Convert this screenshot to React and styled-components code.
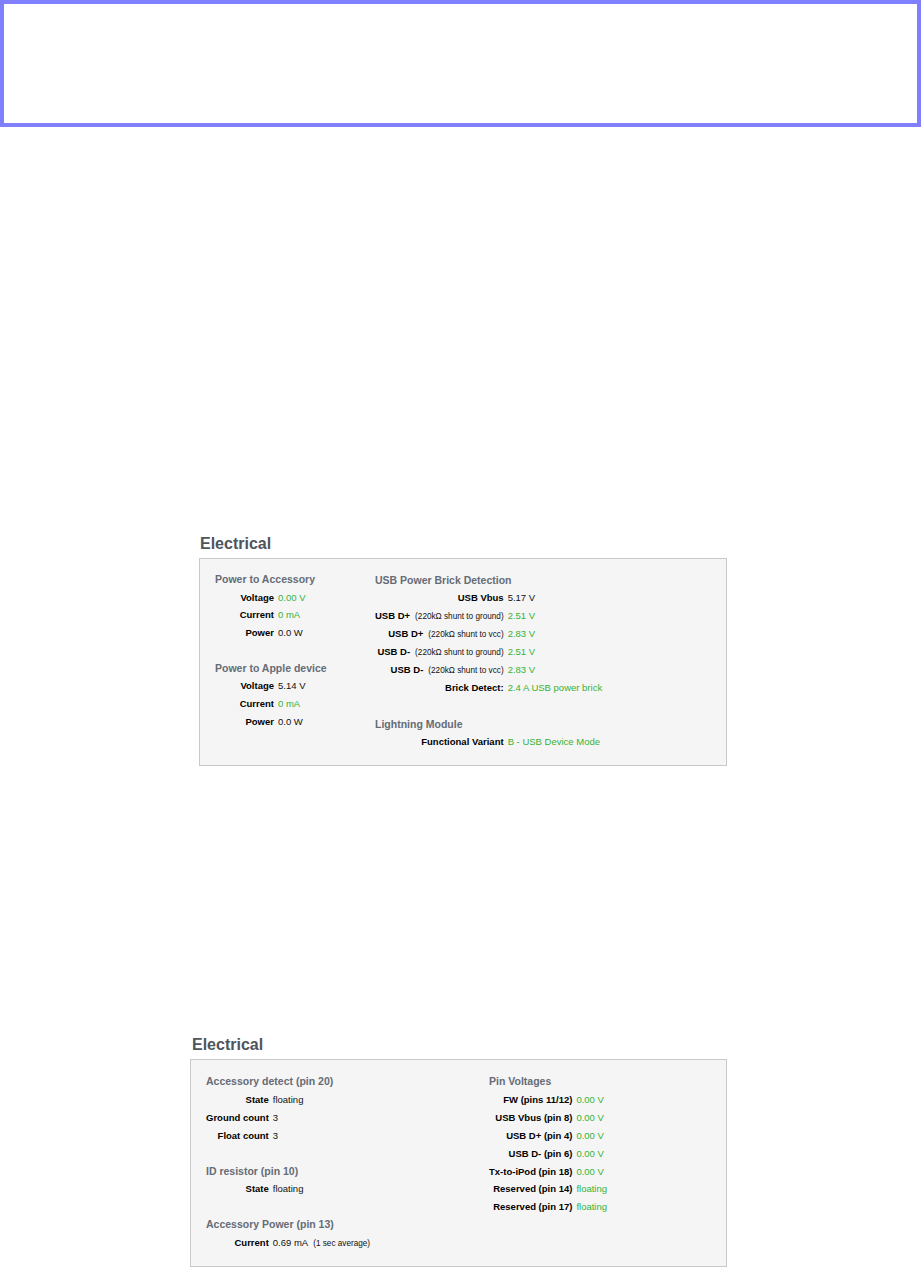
import React from 'react'
import styled, { createGlobalStyle } from 'styled-components'

const GREEN = '#36b336'

const GlobalStyle = createGlobalStyle`
  html, body {
    margin: 0;
    padding: 0;
    background: #ffffff;
    font-family: "Liberation Sans", Arial, Helvetica, sans-serif;
  }
`

//-------------------- empty framed banner at the top -----------------//
const Frame = styled.div`
  height: 127px;
  border: 4px solid #8080ff;
  box-sizing: border-box;
`

//-------------------- one "Electrical" block -------------------------//
const Section = styled.section`
  margin-top: ${p => p.$top}px;
  margin-left: ${p => p.$left}px;
  width: ${p => p.$width}px;
`

const Title = styled.h2`
  margin: 0 0 4px;
  padding-left: ${p => p.$indent}px;
  font-size: 16px;
  line-height: 20px;
  font-weight: bold;
  color: #4e555d;
`

const Panel = styled.div`
  display: flex;
  align-items: flex-start;
  background: #f5f5f5;
  border: 1px solid #c9c9c9;
  padding: ${p => p.$top}px 15px ${p => p.$bottom}px;
`

//-------------------- label / value grid -----------------------------//
const Column = styled.div`
  flex: none;
  width: ${p => (p.$width ? `${p.$width}px` : 'auto')};
  display: grid;
  grid-template-columns: minmax(${p => p.$min || 0}px, max-content) max-content;
  column-gap: 4px;
  align-content: start;
  line-height: ${p => p.$lh}px;
`

const GroupTitle = styled.div`
  grid-column: 1 / -1;
  margin-top: ${p => (p.$first ? 0 : p.$gap)}px;
  font-size: 10.5px;
  font-weight: bold;
  color: #656c75;
  white-space: nowrap;
`

const Label = styled.span`
  text-align: right;
  font-size: 9.5px;
  font-weight: bold;
  color: #000;
  white-space: nowrap;
`

const Value = styled.span`
  font-size: 9.5px;
  color: ${p => (p.$green ? GREEN : '#111')};
  white-space: nowrap;
`

const Note = styled.span`
  margin-left: 5px;
  font-size: 8.2px;
  line-height: 1;
  font-weight: normal;
  color: #111;
`

const Group = ({ title, first, gap, rows }) => (
  <>
    <GroupTitle $first={first} $gap={gap}>{title}</GroupTitle>
    {rows.map((r, i) => (
      <React.Fragment key={i}>
        <Label>
          {r.label}
          {r.note && <Note>{r.note}</Note>}
        </Label>
        <Value $green={r.green}>
          {r.value}
          {r.extra && <Note>{r.extra}</Note>}
        </Value>
      </React.Fragment>
    ))}
  </>
)

const App = () => {
  return (
    <>
      <GlobalStyle />
      <Frame />

      <Section $top={407} $left={199} $width={528}>
        <Title $indent={1}>Electrical</Title>
        <Panel $top={12} $bottom={14}>
          <Column $width={160} $min={59} $lh={17.7}>
            <Group
              first
              title="Power to Accessory"
              rows={[
                { label: 'Voltage', value: '0.00 V', green: true },
                { label: 'Current', value: '0 mA', green: true },
                { label: 'Power', value: '0.0 W' },
              ]}
            />
            <Group
              gap={17.7}
              title="Power to Apple device"
              rows={[
                { label: 'Voltage', value: '5.14 V' },
                { label: 'Current', value: '0 mA', green: true },
                { label: 'Power', value: '0.0 W' },
              ]}
            />
          </Column>
          <Column $lh={18}>
            <Group
              first
              title="USB Power Brick Detection"
              rows={[
                { label: 'USB Vbus', value: '5.17 V' },
                { label: 'USB D+', note: '(220kΩ shunt to ground)', value: '2.51 V', green: true },
                { label: 'USB D+', note: '(220kΩ shunt to vcc)', value: '2.83 V', green: true },
                { label: 'USB D-', note: '(220kΩ shunt to ground)', value: '2.51 V', green: true },
                { label: 'USB D-', note: '(220kΩ shunt to vcc)', value: '2.83 V', green: true },
                { label: 'Brick Detect:', value: '2.4 A USB power brick', green: true },
              ]}
            />
            <Group
              gap={18}
              title="Lightning Module"
              rows={[{ label: 'Functional Variant', value: 'B - USB Device Mode', green: true }]}
            />
          </Column>
        </Panel>
      </Section>

      <Section $top={269} $left={190} $width={537}>
        <Title $indent={2}>Electrical</Title>
        <Panel $top={13} $bottom={14}>
          <Column $width={283} $lh={17.9}>
            <Group
              first
              title="Accessory detect (pin 20)"
              rows={[
                { label: 'State', value: 'floating' },
                { label: 'Ground count', value: '3' },
                { label: 'Float count', value: '3' },
              ]}
            />
            <Group
              gap={17.9}
              title="ID resistor (pin 10)"
              rows={[{ label: 'State', value: 'floating' }]}
            />
            <Group
              gap={17.9}
              title="Accessory Power (pin 13)"
              rows={[{ label: 'Current', value: '0.69 mA', extra: '(1 sec average)' }]}
            />
          </Column>
          <Column $lh={17.9}>
            <Group
              first
              title="Pin Voltages"
              rows={[
                { label: 'FW (pins 11/12)', value: '0.00 V', green: true },
                { label: 'USB Vbus (pin 8)', value: '0.00 V', green: true },
                { label: 'USB D+ (pin 4)', value: '0.00 V', green: true },
                { label: 'USB D- (pin 6)', value: '0.00 V', green: true },
                { label: 'Tx-to-iPod (pin 18)', value: '0.00 V', green: true },
                { label: 'Reserved (pin 14)', value: 'floating', green: true },
                { label: 'Reserved (pin 17)', value: 'floating', green: true },
              ]}
            />
          </Column>
        </Panel>
      </Section>
    </>
  )
}

export default App
